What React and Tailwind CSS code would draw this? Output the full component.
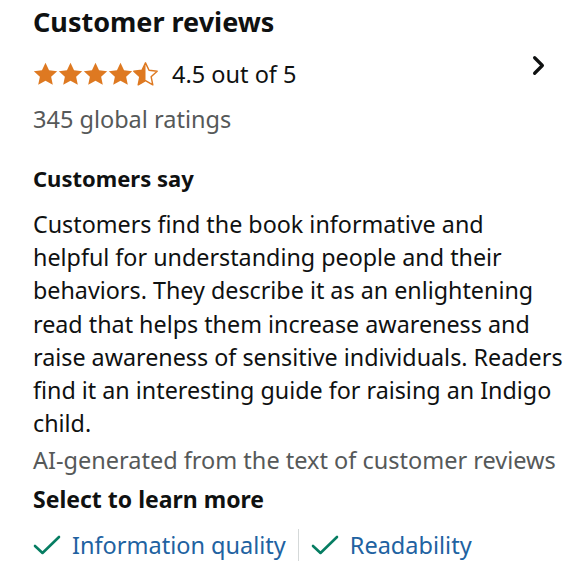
import { ChevronRight } from "lucide-react";

const STAR = "M12 0.8l3.4 7.1 7.8.9-5.8 5.3 1.6 7.8L12 17.9l-7 4 1.6-7.8L.8 8.8l7.8-.9z";

const summaryLines = [
  "Customers find the book informative and",
  "helpful for understanding people and their",
  "behaviors. They describe it as an enlightening",
  "read that helps them increase awareness and",
  "raise awareness of sensitive individuals. Readers",
  "find it an interesting guide for raising an Indigo",
  "child.",
];

const Star = ({ half = false }) => (
  <svg width="25" height="25" viewBox="0 0 24 24" className="block">
    <defs>
      <clipPath id="half-star">
        <rect x="0" y="0" width="12" height="24" />
      </clipPath>
    </defs>
    {half ? (
      <>
        <path d={STAR} fill="none" stroke="#de7921" strokeWidth="1.4" strokeLinejoin="round" />
        <path d={STAR} fill="#de7921" clipPath="url(#half-star)" />
      </>
    ) : (
      <path d={STAR} fill="#de7921" />
    )}
  </svg>
);

const Check = () => (
  <svg width="28" height="20" viewBox="0 0 28 20" className="block">
    <path d="M2 11l7.5 7L26 2" fill="none" stroke="#067d62" strokeWidth="2.6" strokeLinecap="round" strokeLinejoin="round" />
  </svg>
);

export default function App() {
  return (
    <div className="w-[580px] h-[580px] bg-white pl-[33px] pr-[16px] overflow-hidden text-[#0f1111] font-['Noto_Sans',sans-serif]">
      <h2 className="pt-[4px] text-[27px] leading-[36px] font-bold">Customer reviews</h2>

      <div className="mt-[19px] flex items-center h-[30px]">
        <div className="flex">
          <Star />
          <Star />
          <Star />
          <Star />
          <Star half />
        </div>
        <span className="ml-[14px] text-[23.5px] leading-[30px]">4.5 out of 5</span>
        <ChevronRight className="ml-auto mr-[10px] -mt-[18px]" size={31} strokeWidth={2.5} />
      </div>

      <div className="mt-[15px] text-[23.5px] leading-[30px] text-[#565959]">345 global ratings</div>

      <h3 className="mt-[29px] text-[22px] leading-[30px] font-bold">Customers say</h3>

      <p className="mt-[15px] text-[23.3px] leading-[33.2px]">
        {summaryLines.map((line) => (
          <span key={line} className="block whitespace-nowrap">
            {line}
          </span>
        ))}
      </p>

      <div className="mt-[5px] text-[23.5px] leading-[30px] text-[#565959] whitespace-nowrap">
        AI-generated from the text of customer reviews
      </div>

      <div className="mt-[9px] text-[23px] leading-[30px] font-bold">Select to learn more</div>

      <div className="mt-[15px] flex items-center h-[32px]">
        <div className="flex items-center gap-[11px]">
          <Check />
          <span className="text-[23.5px] leading-[30px] text-[#2162a1]">Information quality</span>
        </div>
        <div className="mx-[12px] w-px h-[32px] bg-[#d5d9d9]" />
        <div className="flex items-center gap-[11px]">
          <Check />
          <span className="text-[23.5px] leading-[30px] text-[#2162a1]">Readability</span>
        </div>
      </div>
    </div>
  );
}
